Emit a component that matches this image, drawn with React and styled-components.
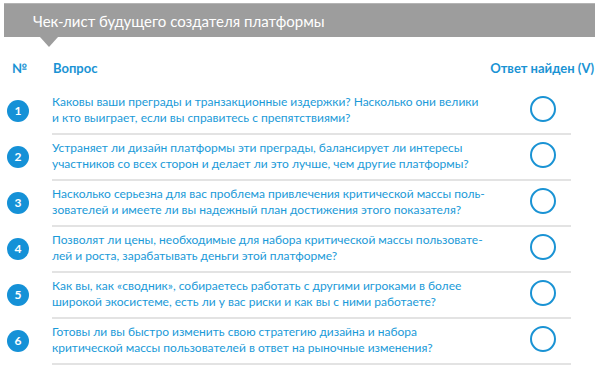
import React from "react";
import styled, { createGlobalStyle } from "styled-components";

const questions = [
    ["Каковы ваши преграды и транзакционные издержки? Насколько они велики", "и кто выиграет, если вы справитесь с препятствиями?"],
    ["Устраняет ли дизайн платформы эти преграды, балансирует ли интересы", "участников со всех сторон и делает ли это лучше, чем другие платформы?"],
    ["Насколько серьезна для вас проблема привлечения критической массы поль-", "зователей и имеете ли вы надежный план достижения этого показателя?"],
    ["Позволят ли цены, необходимые для набора критической массы пользовате-", "лей и роста, зарабатывать деньги этой платформе?"],
    ["Как вы, как «сводник», собираетесь работать с другими игроками в более", "широкой экосистеме, есть ли у вас риски и как вы с ними работаете?"],
    ["Готовы ли вы быстро изменить свою стратегию дизайна и набора", "критической массы пользователей в ответ на рыночные изменения?"],
];

const GlobalStyle = createGlobalStyle`
    body {
        margin: 0;
        background: #fff;
        font-family: Lato, "Liberation Sans", sans-serif;
    }
`;

const Page = styled.div`
    width: 600px;
    height: 369px;
    padding: 3px 5px 0 4px;
    box-sizing: border-box;
    overflow: hidden;
`;

const TitleBar = styled.div`
    position: relative;
    height: 34px;
    background: #9d9d9d;
    border-top: 1px solid #b4b4b4;
    color: #fff;
    font-size: 15px;
    display: flex;
    align-items: center;
    padding-left: 29px;
    box-sizing: border-box;

    &::after {
        content: "";
        position: absolute;
        left: 36px;
        top: 100%;
        border-left: 9px solid transparent;
        border-right: 9px solid transparent;
        border-top: 10px solid #9d9d9d;
    }
`;

const HeadRow = styled.div`
    display: flex;
    align-items: center;
    height: 18px;
    margin-top: 22px;
    color: #1a93d4;
    font-size: 13px;
    font-weight: 700;
`;

const HeadNum = styled.div`
    width: 49px;
    padding-left: 8px;
    box-sizing: border-box;
`;

const HeadQuestion = styled.div`
    flex: 1;
`;

const HeadAnswer = styled.div`
    padding-right: 1px;
`;

const List = styled.div`
    margin-top: 12px;
`;

const Row = styled.div`
    display: flex;
    align-items: center;
    height: 46px;
`;

const Badge = styled.div`
    width: 22px;
    height: 22px;
    margin: 0 23px 3px 3px;
    border-radius: 50%;
    background: #1591d7;
    color: #fff;
    font-size: 12px;
    font-weight: 700;
    display: flex;
    align-items: center;
    justify-content: center;
    flex-shrink: 0;
`;

const Body = styled.div`
    width: 519px;
    height: 46px;
    display: flex;
    align-items: center;
    padding-bottom: 2px;
    border-bottom: 2px solid #e3e3e3;
    box-sizing: border-box;
`;

const Question = styled.div`
    flex: 1;
    color: #1a9ad8;
    font-size: 12px;
    line-height: 16px;
    white-space: nowrap;
`;

const Check = styled.div`
    width: 22px;
    height: 22px;
    margin: 0 15px 2px 0;
    border: 2px solid #1a93d4;
    border-radius: 50%;
    flex-shrink: 0;
`;

const App = () => (
    <Page>
        <GlobalStyle />
        <TitleBar>Чек-лист будущего создателя платформы</TitleBar>
        <HeadRow>
            <HeadNum>№</HeadNum>
            <HeadQuestion>Вопрос</HeadQuestion>
            <HeadAnswer>Ответ найден (V)</HeadAnswer>
        </HeadRow>
        <List>
            {questions.map((lines, i) => (
                <Row key={i}>
                    <Badge>{i + 1}</Badge>
                    <Body>
                        <Question>
                            {lines[0]}
                            <br />
                            {lines[1]}
                        </Question>
                        <Check />
                    </Body>
                </Row>
            ))}
        </List>
    </Page>
);

export default App;
